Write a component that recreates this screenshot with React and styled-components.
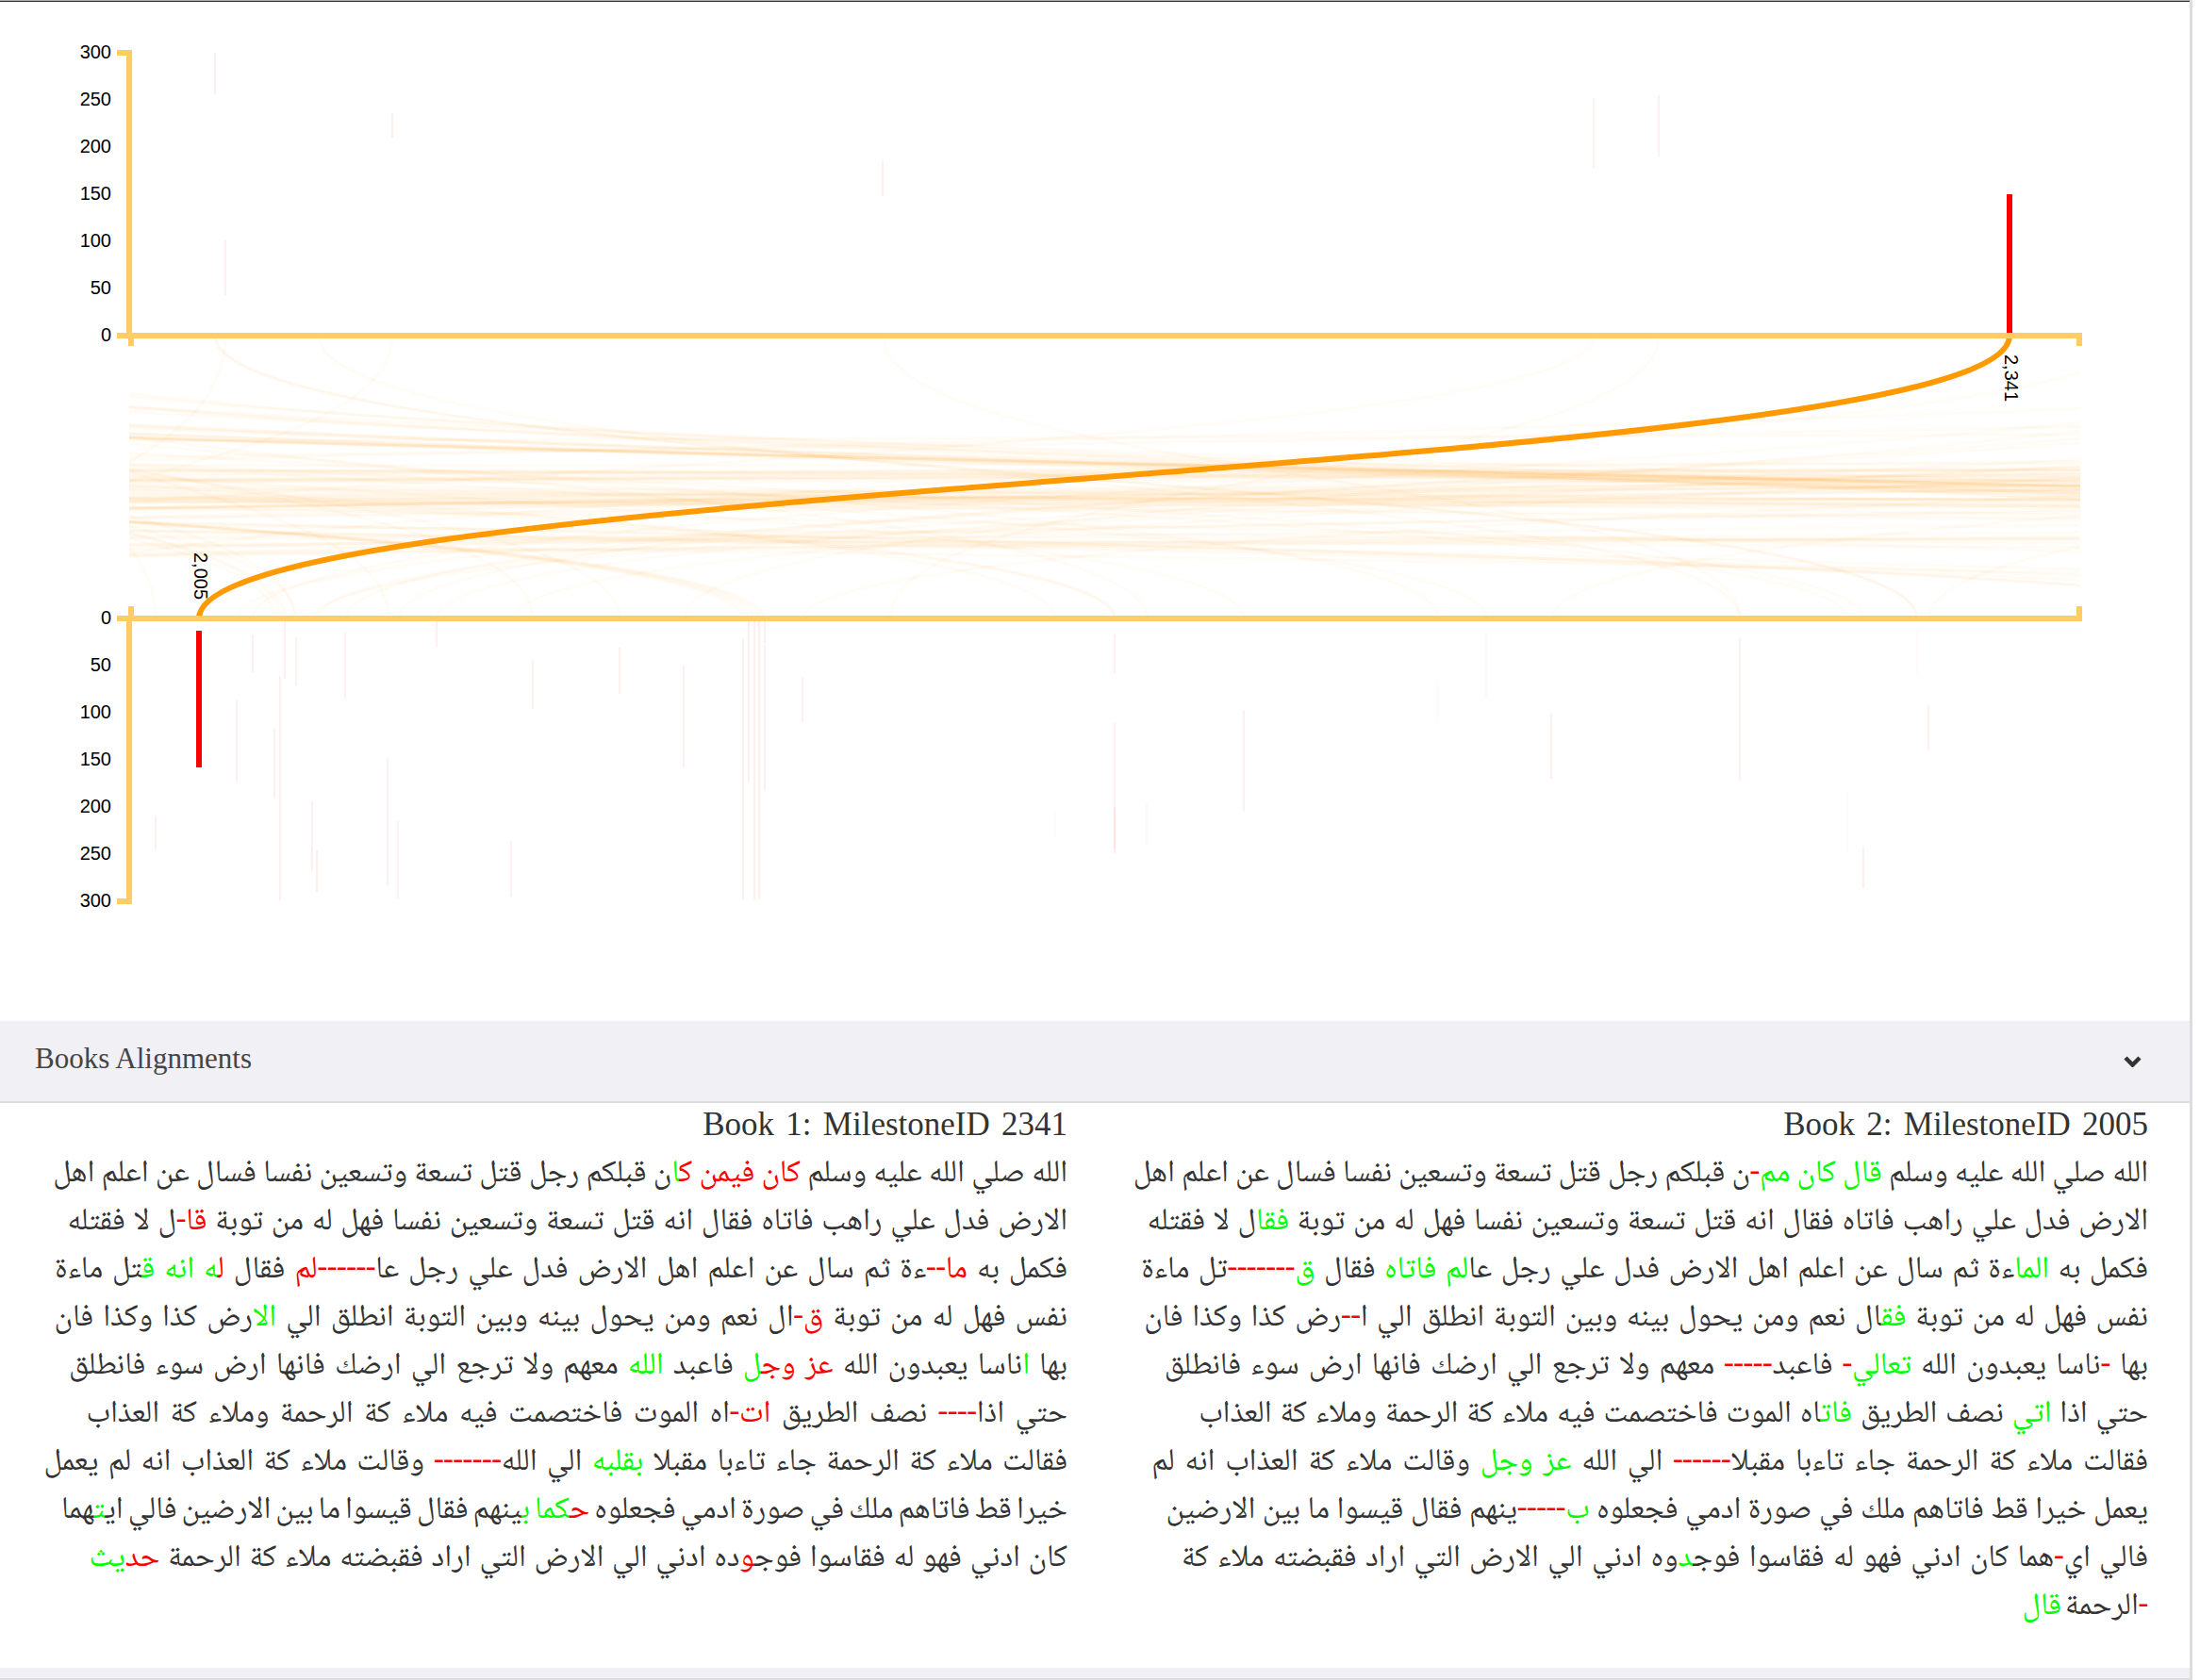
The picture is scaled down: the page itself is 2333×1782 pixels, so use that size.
import React from 'react';
import styled, {createGlobalStyle} from 'styled-components';

const GlobalStyle = createGlobalStyle`
  body {
    margin: 0;
    background: #fff;
    font-family: "Liberation Serif", serif;
  }
`;

const CHART_LEFT = 137;
const CHART_RIGHT = 2206;
const TOP_Y = 356;
const BOTTOM_Y = 656;
const MID_Y = (TOP_Y + BOTTOM_Y) / 2;

const TICKS = [0, 50, 100, 150, 200, 250, 300];

// top bars: x, y1, y2
const TOP_BARS = [
    [228, 56, 100], [416, 120, 146], [239, 255, 313],
    [936, 171, 208], [1690, 104, 178], [1759, 101, 166],
];

// bottom bars: x, y1, y2, drawn lighter when the fourth value is set
const BOTTOM_BARS = [
    [165, 865, 901], [251, 743, 829], [268, 673, 713], [291, 773, 847],
    [297, 717, 955], [302, 659, 720], [314, 676, 727], [331, 850, 924],
    [336, 902, 946], [366, 671, 742], [411, 804, 939], [422, 871, 953],
    [463, 659, 686], [542, 892, 951], [565, 700, 752], [657, 687, 736],
    [725, 706, 814], [788, 678, 955], [794, 659, 830], [800, 659, 955],
    [805, 659, 954], [811, 659, 682], [811, 684, 839], [851, 719, 766],
    [1119, 861, 889, 1], [1182, 673, 714], [1182, 767, 900], [1182, 857, 905],
    [1216, 852, 897, 1], [1319, 753, 861], [1525, 726, 762, 1], [1576, 672, 741, 1],
    [1645, 757, 826], [1845, 677, 828], [1959, 841, 904, 1], [1976, 899, 942],
    [2033, 668, 716, 1], [2045, 748, 796],
];

// arcs with both ends roughly known: top x, bottom x
const ARCS = [
    [228, 2033], [239, -19], [416, -110], [937, 1845], [1691, -624], [1759, 944], [2267, -71],
    [-2270, 787], [-2270, 793], [-2270, 799], [-2270, 805], [-2270, 810],
    [-700, 302], [-700, 297], [-600, 314], [-800, 291],
    [3400, 251], [2600, 268], [4200, 332], [3600, 336], [2900, 367], [2800, 423],
    [3500, 463], [3900, 545], [2600, 726], [4550, 852], [3900, 1646], [3500, 2046],
    [-100, 165], [-400, 312], [-100, 412], [-200, 565], [-300, 657], [-1100, 1119],
    [-1500, 1182], [-1350, 1182], [-200, 1216], [-1000, 1319], [-400, 1525], [-900, 1577],
    [338, 1845], [-1100, 1959], [-800, 1976], [228, 2033],
];

const spread = (y) => {
    const t = (y - TOP_Y) / 300;
    return 3 * t * t - 2 * t * t * t;
};

// finds the link that passes through two given points
const through = (xa, ya, xb, yb) => {
    const delta = (xb - xa) / (spread(yb) - spread(ya));
    const x0 = xa - delta * spread(ya);
    return [x0, x0 + delta];
};

const seeded = (seed) => () => {
    seed = (seed * 16807) % 2147483647;
    return (seed - 1) / 2147483646;
};

const buildLinks = () => {
    const rnd = seeded(4711);
    const pick = (a, b) => a + (b - a) * rnd();
    const links = [...ARCS];
    const band = (count, xa, ya0, ya1, xb, yb0, yb1) => {
        for (let i = 0; i < count; i++) {
            links.push(through(xa, pick(ya0, ya1), xb, pick(yb0, yb1)));
        }
    };
    band(6, 137, 403, 425, 1170, 468, 482);
    band(9, 137, 445, 455, 1170, 484, 492);
    band(4, 137, 432, 445, 1170, 480, 490);
    band(6, 137, 588, 608, 1170, 572, 595);
    band(5, 137, 545, 562, 1170, 530, 550);
    band(14, 137, 488, 515, 2206, 484, 512);
    band(14, 137, 515, 548, 2206, 536, 566);
    band(8, 137, 530, 560, 2206, 495, 520);
    band(3, 1170, 448, 468, 2206, 418, 455);
    band(6, 1170, 592, 608, 2206, 612, 632);
    band(5, 1170, 570, 590, 2206, 585, 605);
    return links;
};

const LINKS = buildLinks();

const linkPath = ([x0, x1]) =>
    `M${x0},${TOP_Y} C${x0},${MID_Y} ${x1},${MID_Y} ${x1},${BOTTOM_Y}`;

const BOOK_ONE = [
    'الله صلي الله عليه وسلم {r|كان فيمن} {r|ك}{g|ا}ن قبلكم رجل قتل تسعة وتسعين نفسا فسال عن اعلم اهل',
    'الارض فدل علي راهب فاتاه فقال انه قتل تسعة وتسعين نفسا فهل له من توبة {r|قا-}ل لا فقتله',
    'فكمل به {r|ما--}ءة ثم سال عن اعلم اهل الارض فدل علي رجل عا{r|------لم} فقال {r|ل}{g|ه} {g|انه} {g|ق}تل ماءة',
    'نفس فهل له من توبة {r|ق-}ال نعم ومن يحول بينه وبين التوبة انطلق الي {g|الا}رض كذا وكذا فان',
    'بها {g|ا}ناسا يعبدون الله {r|عز وج}{g|ل} فاعبد {g|الله} معهم ولا ترجع الي ارضك فانها ارض سوء فانطلق',
    'حتي اذا{r|----} نصف الطريق {r|ات-}اه الموت فاختصمت فيه ملاء كة الرحمة وملاء كة العذاب',
    'فقالت ملاء كة الرحمة جاء تاءبا مقبلا {g|بقلبه} الي الله{r|-------} وقالت ملاء كة العذاب انه لم يعمل',
    'خيرا قط فاتاهم ملك في صورة ادمي فجعلوه {r|ح}{g|كما} {g|ب}ينهم فقال قيسوا ما بين الارضين فالي اي{g|ت}هما',
    'كان ادني فهو له فقاسوا فوج{r|و}ده ادني الي الارض التي اراد فقبضته ملاء كة الرحمة {r|حد}{g|يث}',
];

const BOOK_TWO = [
    'الله صلي الله عليه وسلم {g|قال كان مم}{r|-}ن قبلكم رجل قتل تسعة وتسعين نفسا فسال عن اعلم اهل',
    'الارض فدل علي راهب فاتاه فقال انه قتل تسعة وتسعين نفسا فهل له من توبة {g|فقا}ل لا فقتله',
    'فكمل به {g|الما}ءة ثم سال عن اعلم اهل الارض فدل علي رجل عا{g|لم} {g|فاتاه} فقال {g|ق}{r|-------}تل ماءة',
    'نفس فهل له من توبة {g|فق}ال نعم ومن يحول بينه وبين التوبة انطلق الي ا{r|--}رض كذا وكذا فان',
    'بها {r|-}ناسا يعبدون الله {g|تعالي}{r|-} فاعبد{r|-----} معهم ولا ترجع الي ارضك فانها ارض سوء فانطلق',
    'حتي اذا {g|اتي} نصف الطريق {g|فات}اه الموت فاختصمت فيه ملاء كة الرحمة وملاء كة العذاب',
    'فقالت ملاء كة الرحمة جاء تاءبا مقبلا{r|------} الي الله {g|عز وجل} وقالت ملاء كة العذاب انه لم',
    'يعمل خيرا قط فاتاهم ملك في صورة ادمي فجعلوه {g|ب}{r|-----}ينهم فقال قيسوا ما بين الارضين',
    'فالي اي{r|-}هما كان ادني فهو له فقاسوا فوج{g|د}وه ادني الي الارض التي اراد فقبضته ملاء كة',
    '{r|-}الرحمة {g|قال}',
];

// word spacing per line, so each line ends where it ends in the source layout
const BOOK_ONE_SPACING = [0, 1.4, 2.6, 2.8, 2.7, 4.1, 3, -2.3, 1.4];
const BOOK_TWO_SPACING = [-0.2, 1.3, 2.1, 2.3, 2.8, 1.5, 3.5, 0.2, 2, -3.5];

const splitMarks = (line) =>
    line.split(/(\{[rg]\|[^}]*\})/).filter(Boolean).map((part) => {
        const match = part.match(/^\{([rg])\|(.*)\}$/);
        return match ? {mark: match[1], text: match[2]} : {mark: null, text: part};
    });

const Chart = () => (
    <ChartSvg width="2322" height="1081" viewBox="0 2 2322 1081">
        <defs>
            <clipPath id="link-clip">
                <rect x={CHART_LEFT} y={TOP_Y} width={CHART_RIGHT - CHART_LEFT} height={BOTTOM_Y - TOP_Y}/>
            </clipPath>
        </defs>
        <g clipPath="url(#link-clip)">
            {LINKS.map((link, index) => <FaintLink key={index} d={linkPath(link)}/>)}
            <MainLink d={linkPath([2131, 211])}/>
        </g>
        {TOP_BARS.map(([x, y1, y2], index) => <FaintBar key={index} x1={x} x2={x} y1={y1} y2={y2}/>)}
        {BOTTOM_BARS.map(([x, y1, y2, soft], index) =>
            <FaintBar key={index} x1={x} x2={x} y1={y1} y2={y2} $soft={soft}/>
        )}
        <MainBar x1="2131" x2="2131" y1="206" y2="353"/>
        <MainBar x1="211" x2="211" y1="669" y2="814"/>
        <AxisPath d={`M124,56 H137 V356 H124`}/>
        <AxisPath d={`M139,367 V356 H2205 V367`}/>
        <AxisPath d={`M124,956 H137 V656 H124`}/>
        <AxisPath d={`M139,643 V656 H2205 V643`}/>
        {TICKS.map((tick) =>
            <React.Fragment key={tick}>
                <TickLabel x="118" y={356 - tick + 6}>{tick}</TickLabel>
                <TickLabel x="118" y={656 + tick + 6}>{tick}</TickLabel>
            </React.Fragment>
        )}
        <EndLabel transform="translate(2126,376) rotate(90)">2,341</EndLabel>
        <EndLabel transform="translate(206,586) rotate(90)">2,005</EndLabel>
    </ChartSvg>
);

const Book = ({title, lines, spacing, $inset}) => (
    <BookColumn $inset={$inset}>
        <BookTitle>{title}</BookTitle>
        <BookText dir="rtl">
            {lines.map((line, index) =>
                <BookLine key={index} $spacing={spacing[index]}>
                    {splitMarks(line).map((part, i) =>
                        <Mark key={i} $mark={part.mark}>{part.text}</Mark>
                    )}
                </BookLine>
            )}
        </BookText>
    </BookColumn>
);

const App = () => (
    <Page>
        <GlobalStyle/>
        <TopRule/>
        <Chart/>
        <PanelHeader>
            <PanelTitle>Books Alignments</PanelTitle>
            <Chevron width="19" height="12" viewBox="0 0 19 12">
                <polyline points="2,2 9.5,9.5 17,2"/>
            </Chevron>
        </PanelHeader>
        <BooksGrid>
            <Book title="Book 1: MilestoneID 2341" lines={BOOK_ONE} spacing={BOOK_ONE_SPACING} $inset={29}/>
            <Book title="Book 2: MilestoneID 2005" lines={BOOK_TWO} spacing={BOOK_TWO_SPACING} $inset={44}/>
        </BooksGrid>
        <PanelFooter/>
    </Page>
);

const Page = styled.div`
  width: 2322px;
  border-right: 3px solid #ddd;
  min-height: 1782px;
  box-sizing: content-box;
`;

const TopRule = styled.div`
  height: 2px;
  background: linear-gradient(#aaa 50%, #333 50%);
`;

const ChartSvg = styled.svg`
  display: block;
`;

const FaintLink = styled.path`
  fill: none;
  stroke: #ff9900;
  stroke-width: 3;
  stroke-opacity: 0.04;
`;

const MainLink = styled.path`
  fill: none;
  stroke: #ff9900;
  stroke-width: 6;
`;

const FaintBar = styled.line`
  stroke: #ff0000;
  stroke-width: 1.5;
  stroke-opacity: ${props => props.$soft ? 0.04 : 0.08};
`;

const MainBar = styled.line`
  stroke: #ff0000;
  stroke-width: 6;
`;

const AxisPath = styled.path`
  fill: none;
  stroke: #ffcc66;
  stroke-width: 6;
`;

const TickLabel = styled.text`
  font-family: "Liberation Sans", sans-serif;
  font-size: 20px;
  fill: #000;
  text-anchor: end;
`;

const EndLabel = styled.text`
  font-family: "Liberation Sans", sans-serif;
  font-size: 20px;
  fill: #000;
`;

const PanelHeader = styled.div`
  height: 85px;
  display: flex;
  align-items: center;
  justify-content: space-between;
  padding: 0 51px 0 37px;
  background: #f0f0f5;
  border-bottom: 2px solid #ddd;
`;

const PanelTitle = styled.span`
  font-size: 31px;
  color: #444;
  margin-top: -5px;
`;

const Chevron = styled.svg`
  fill: none;
  stroke: #333;
  stroke-width: 4.5;
`;

const BooksGrid = styled.div`
  display: grid;
  grid-template-columns: 1161px 1161px;
  height: 599px;
`;

const BookColumn = styled.div`
  padding-right: ${props => props.$inset}px;
  text-align: right;
`;

const BookTitle = styled.div`
  font-size: 35px;
  line-height: 46px;
  word-spacing: 3.5px;
  color: #333;
  height: 51px;
`;

const BookText = styled.div`
  font-family: "Noto Naskh Arabic", "Amiri", "Traditional Arabic", "Noto Sans Arabic", "DejaVu Sans", serif;
  font-size: 33px;
  line-height: 51px;
  color: #333;
`;

const BookLine = styled.div`
  white-space: nowrap;
  text-align: right;
  height: 51px;
  word-spacing: ${props => props.$spacing}px;
`;

const Mark = styled.span`
  color: ${props => props.$mark === 'r' ? '#ff0000' : props.$mark === 'g' ? '#00ff00' : 'inherit'};
`;

const PanelFooter = styled.div`
  height: 11px;
  background: #f0f0f5;
  border-bottom: 2px solid #ddd;
`;

export default App;
